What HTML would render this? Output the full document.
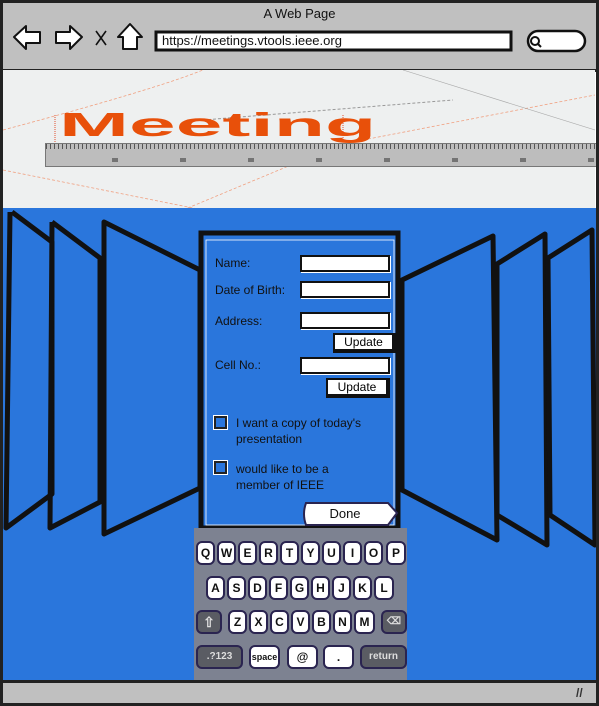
<!DOCTYPE html>
<html><head><style>
*{margin:0;padding:0;box-sizing:border-box}
body{width:599px;height:706px;overflow:hidden;background:#fff;font-family:"Liberation Sans",sans-serif;position:relative}
.a{position:absolute}
.lbl{position:absolute;font-size:12px;color:#111}
.fld{position:absolute;left:300px;width:90px;height:17px;background:#fff;border:2px solid #111;box-shadow:1px 1px 0 #fff}
.btn{position:absolute;background:#fff;border:2px solid #111;border-right-width:4px;border-bottom-width:4px;font-size:12px;text-align:center;line-height:14px}
.cb{position:absolute;left:214px;width:13px;height:13px;border:2px solid #222;background:#2a76dc;outline:1px solid #fff}
.k{position:absolute;height:24px;background:#fff;border:2px solid #2a2450;border-radius:6px;font-size:12px;font-weight:bold;text-align:center;line-height:20px;color:#111}
.d{background:#5a5c63;color:#ddd;font-size:10px}
</style></head><body>
<div class="a" style="left:0;top:0;width:599px;height:72px;background:#c0c0c0;border:3px solid #222;border-bottom:3px solid #222"></div>
<div class="a" style="left:0;top:6px;width:599px;text-align:center;font-size:13px;color:#111">A Web Page</div>
<svg class="a" style="left:0;top:0" width="599" height="72">
<g fill="#fff" stroke="#111" stroke-width="2" stroke-linejoin="round">
<path d="M14 37 L26 26 L26 32 L40 32 L40 43 L26 43 L26 49 Z"/>
<path d="M82 37 L70 26 L70 32 L56 32 L56 43 L70 43 L70 49 Z"/>
<path d="M130 24 L118 37 L123 37 L123 49 L137 49 L137 37 L142 37 Z"/>
</g>
<path d="M96 31 L106 45 M106 31 L96 45" stroke="#111" stroke-width="1.6"/>
<rect x="156" y="32" width="355" height="18" fill="#fff" stroke="#111" stroke-width="3"/>
<rect x="528" y="31" width="57" height="20" rx="10" fill="#fff" stroke="#111" stroke-width="2.5"/>
<circle cx="535" cy="41" r="4" fill="none" stroke="#111" stroke-width="2"/>
<path d="M538 44 L541 47" stroke="#111" stroke-width="2"/>
</svg>
<div class="a" style="left:162px;top:33px;font-size:13px;color:#111">https://meetings.vtools.ieee.org</div>
<div class="a" style="left:3px;top:70px;width:592px;height:138px;background:#eef0f0"></div>
<svg class="a" style="left:3px;top:70px" width="592" height="138">
<g fill="none" stroke="#f0a080" stroke-width="0.8" stroke-dasharray="3,2">
<path d="M0 60 Q150 20 200 0"/><path d="M360 70 L592 25"/><path d="M0 100 L200 140"/><path d="M120 165 L300 90"/>
</g>
<path d="M200 50 L450 30" stroke="#999" stroke-dasharray="3,2" fill="none"/>
<path d="M400 0 L592 60" stroke="#aaa" fill="none" stroke-width="0.6"/>
<path d="M52 45 L52 72 M340 45 L340 72" stroke="#e05030" stroke-dasharray="1,1"/>
</svg>
<div class="a" style="left:59px;top:105px;font-size:42px;font-weight:bold;color:#e8500a;letter-spacing:0px;transform:scaleX(2.0) scaleY(0.8);transform-origin:left top;line-height:50px">Meeting</div>
<div class="a" style="left:45px;top:143px;width:554px;height:24px;border:1px solid #777;border-right:none;background-image:repeating-linear-gradient(90deg,#555 0 1px,transparent 1px 4px);background-size:100% 5px;background-repeat:no-repeat;background-color:#bdbdbd"></div>
<div class="a" style="left:0;top:158px;width:599px;height:4px;background-image:repeating-linear-gradient(90deg,transparent 0 62px,#444 62px 68px);left:50px;width:549px;opacity:.6"></div>
<div class="a" style="left:3px;top:208px;width:593px;height:472px;background:#2a76dc"></div>
<svg class="a" style="left:0;top:200px" width="599" height="360">
<g fill="none" stroke="#111" stroke-width="5" stroke-linejoin="round">
<path d="M12 12 L52 42 L52 294 L6 328 L10 12"/>
<path d="M52 22 L100 58 L100 302 L50 328 L52 22"/>
<path d="M104 22 L200 70 L200 288 L104 334 Z"/>
<path d="M402 80 L493 36 L497 340 L402 290 Z"/>
<path d="M497 64 L545 34 L547 345 L497 315 Z"/>
<path d="M548 58 L592 30 L595 345 L550 315 Z"/>
</g>
<rect x="201" y="33" width="197" height="295" fill="none" stroke="#111" stroke-width="5"/>
<rect x="206" y="40" width="188" height="285" fill="none" stroke="#fff" stroke-width="0.8"/>
</svg>
<div class="lbl" style="left:215px;top:256px">Name:</div>
<div class="lbl" style="left:215px;top:283px">Date of Birth:</div>
<div class="lbl" style="left:215px;top:314px">Address:</div>
<div class="lbl" style="left:215px;top:358px">Cell No.:</div>
<div class="fld" style="top:255px"></div>
<div class="fld" style="top:281px"></div>
<div class="fld" style="top:312px"></div>
<div class="fld" style="top:357px"></div>
<div class="btn" style="left:333px;top:333px;width:63px;height:20px">Update</div>
<div class="btn" style="left:326px;top:378px;width:64px;height:20px">Update</div>
<div class="cb" style="top:416px"></div>
<div class="cb" style="top:461px"></div>
<div class="lbl" style="left:236px;top:415px;line-height:16px">I want a copy of today's<br>presentation</div>
<div class="lbl" style="left:236px;top:461px;line-height:16px">would like to be a<br>member of IEEE</div>
<svg class="a" style="left:300px;top:501px" width="100" height="27"><path d="M6 2 L88 2 L97 12 L88 24 L6 24 Q2 13 6 2 Z" fill="#fff" stroke="#2a2450" stroke-width="2"/></svg>
<div class="lbl" style="left:300px;top:506px;width:90px;text-align:center;font-size:13px">Done</div>
<div class="a" style="left:194px;top:528px;width:213px;height:152px;background:#7d8291"></div>
<div class="k" style="left:196px;top:541px;width:19px">Q</div>
<div class="k" style="left:217px;top:541px;width:19px">W</div>
<div class="k" style="left:238px;top:541px;width:19px">E</div>
<div class="k" style="left:259px;top:541px;width:19px">R</div>
<div class="k" style="left:280px;top:541px;width:19px">T</div>
<div class="k" style="left:301px;top:541px;width:19px">Y</div>
<div class="k" style="left:322px;top:541px;width:19px">U</div>
<div class="k" style="left:343px;top:541px;width:19px">I</div>
<div class="k" style="left:364px;top:541px;width:19px">O</div>
<div class="k" style="left:386px;top:541px;width:20px">P</div>
<div class="k" style="left:206px;top:576px;width:19px">A</div>
<div class="k" style="left:227px;top:576px;width:19px">S</div>
<div class="k" style="left:248px;top:576px;width:19px">D</div>
<div class="k" style="left:269px;top:576px;width:19px">F</div>
<div class="k" style="left:290px;top:576px;width:19px">G</div>
<div class="k" style="left:311px;top:576px;width:19px">H</div>
<div class="k" style="left:332px;top:576px;width:19px">J</div>
<div class="k" style="left:353px;top:576px;width:19px">K</div>
<div class="k" style="left:374px;top:576px;width:20px">L</div>
<div class="k d" style="left:196px;top:610px;width:26px;font-size:14px">⇧</div>
<div class="k" style="left:228px;top:610px;width:19px">Z</div>
<div class="k" style="left:249px;top:610px;width:19px">X</div>
<div class="k" style="left:270px;top:610px;width:19px">C</div>
<div class="k" style="left:291px;top:610px;width:19px">V</div>
<div class="k" style="left:312px;top:610px;width:19px">B</div>
<div class="k" style="left:333px;top:610px;width:19px">N</div>
<div class="k" style="left:354px;top:610px;width:21px">M</div>
<div class="k d" style="left:381px;top:610px;width:26px">⌫</div>
<div class="k d" style="left:196px;top:645px;width:47px">.?123</div>
<div class="k" style="left:249px;top:645px;width:31px;font-size:9px">space</div>
<div class="k" style="left:287px;top:645px;width:31px">@</div>
<div class="k" style="left:323px;top:645px;width:31px">.</div>
<div class="k d" style="left:360px;top:645px;width:47px">return</div>
<div class="a" style="left:0;top:680px;width:599px;height:26px;background:#c0c0c0;border:3px solid #222"></div>
<div class="a" style="left:576px;top:686px;font-size:12px;color:#333;font-weight:bold">//</div>
<div class="a" style="left:0;top:70px;width:3px;height:612px;background:#222"></div>
<div class="a" style="left:596px;top:70px;width:3px;height:612px;background:#222"></div>
</body></html>
